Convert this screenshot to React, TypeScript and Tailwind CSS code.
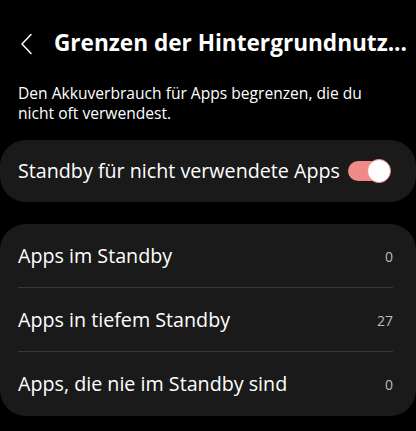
import { useState } from 'react';

const font = { fontFamily: '"Open Sans", "Noto Sans", sans-serif' };

function Row({ label, value, last }: { label: string; value: string; last?: boolean }) {
  return (
    <div className="relative flex h-[64px] items-center justify-between pl-[18px] pr-[23px]">
      <span className="text-[19.7px] font-medium text-white">{label}</span>
      <span className="text-[14px] text-[#bdbdbd]">{value}</span>
      {!last && <div className="absolute bottom-0 left-[18px] right-[23px] h-px bg-[#3a3a3a]" />}
    </div>
  );
}

export default function App() {
  const [on, setOn] = useState(true);

  return (
    <div className="h-[431px] w-[416px] overflow-hidden bg-black" style={font}>
      {/* Kopfzeile */}
      <div className="flex h-[62px] items-end pb-[2px]">
        <svg className="ml-[19px] mb-[5px]" width="16" height="22" viewBox="0 0 16 22" fill="none">
          <path d="M12 1.5 L3 11 L12 20.5" stroke="#ffffff" strokeWidth="1.5" strokeLinecap="round" strokeLinejoin="round" />
        </svg>
        <h1 className="ml-[19px] whitespace-nowrap text-[22.6px] font-bold text-white">
          Grenzen der Hintergrundnutz...
        </h1>
      </div>

      <p className="mt-[21px] px-[18px] text-[15.6px] leading-[20px] text-white">
        Den Akkuverbrauch für Apps begrenzen, die du nicht oft verwendest.
      </p>

      {/* Schalter */}
      <div className="mt-[17px] flex h-[62px] items-center justify-between rounded-[26px] bg-[#1a1a1a] pl-[18px] pr-[26px]">
        <span className="whitespace-nowrap text-[19.7px] font-medium text-white">Standby für nicht verwendete Apps</span>
        <button
          onClick={() => setOn(!on)}
          className={`relative h-[20px] w-[42px] shrink-0 rounded-full ${on ? 'bg-[#f08a88]' : 'bg-[#555]'}`}
        >
          <span
            className={`absolute top-[-2px] h-[24px] w-[24px] rounded-full border border-[#f08a88] bg-white ${on ? 'right-[-1px]' : 'left-[-1px]'}`}
          />
        </button>
      </div>

      {/* Liste */}
      <div className="mt-[22px] rounded-[26px] bg-[#1a1a1a]">
        <Row label="Apps im Standby" value="0" />
        <Row label="Apps in tiefem Standby" value="27" />
        <Row label="Apps, die nie im Standby sind" value="0" last />
      </div>
    </div>
  );
}
